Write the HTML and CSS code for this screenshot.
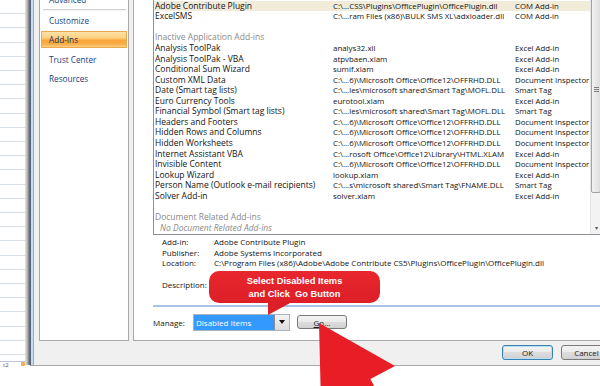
FILE: index.html
```html
<!DOCTYPE html>
<html>
<head>
<meta charset="utf-8">
<link rel="stylesheet" href="styles.css">
</head>
<body>
<div class="screen">
  <div class="sheet">
    <div class="sheet-grid"></div>
    <div class="sheet-tabs"><span class="tab-text">t2</span><span class="tab-icon"></span></div>
  </div>
  <div class="sheet-shadow"></div>
  <div class="dialog">
    <div class="panels">
      <nav class="nav">
        <div class="nav-item nav-top">Advanced</div>
        <div class="nav-sep"></div>
        <div class="nav-item">Customize</div>
        <div class="nav-item selected">Add-Ins</div>
        <div class="nav-item">Trust Center</div>
        <div class="nav-item">Resources</div>
      </nav>
      <section class="content">
        <div class="listbox">
          <div class="rows">
            <div class="row hl"><span>Adobe Contribute Plugin</span><span>C:\...CSS\Plugins\OfficePlugin\OfficePlugin.dll</span><span>COM Add-in</span></div>
            <div class="row"><span>ExcelSMS</span><span>C:\...ram Files (x86)\BULK SMS XL\adxloader.dll</span><span>COM Add-in</span></div>
            <div class="row"></div>
            <div class="row head"><span>Inactive Application Add-ins</span></div>
            <div class="row"><span>Analysis ToolPak</span><span>analys32.xll</span><span>Excel Add-in</span></div>
            <div class="row"><span>Analysis ToolPak - VBA</span><span>atpvbaen.xlam</span><span>Excel Add-in</span></div>
            <div class="row"><span>Conditional Sum Wizard</span><span>sumif.xlam</span><span>Excel Add-in</span></div>
            <div class="row"><span>Custom XML Data</span><span>C:\...6)\Microsoft Office\Office12\OFFRHD.DLL</span><span>Document Inspector</span></div>
            <div class="row"><span>Date (Smart tag lists)</span><span>C:\...les\microsoft shared\Smart Tag\MOFL.DLL</span><span>Smart Tag</span></div>
            <div class="row"><span>Euro Currency Tools</span><span>eurotool.xlam</span><span>Excel Add-in</span></div>
            <div class="row"><span>Financial Symbol (Smart tag lists)</span><span>C:\...les\microsoft shared\Smart Tag\MOFL.DLL</span><span>Smart Tag</span></div>
            <div class="row"><span>Headers and Footers</span><span>C:\...6)\Microsoft Office\Office12\OFFRHD.DLL</span><span>Document Inspector</span></div>
            <div class="row"><span>Hidden Rows and Columns</span><span>C:\...6)\Microsoft Office\Office12\OFFRHD.DLL</span><span>Document Inspector</span></div>
            <div class="row"><span>Hidden Worksheets</span><span>C:\...6)\Microsoft Office\Office12\OFFRHD.DLL</span><span>Document Inspector</span></div>
            <div class="row"><span>Internet Assistant VBA</span><span>C:\...rosoft Office\Office12\Library\HTML.XLAM</span><span>Excel Add-in</span></div>
            <div class="row"><span>Invisible Content</span><span>C:\...6)\Microsoft Office\Office12\OFFRHD.DLL</span><span>Document Inspector</span></div>
            <div class="row"><span>Lookup Wizard</span><span>lookup.xlam</span><span>Excel Add-in</span></div>
            <div class="row"><span>Person Name (Outlook e-mail recipients)</span><span>C:\...s\microsoft shared\Smart Tag\FNAME.DLL</span><span>Smart Tag</span></div>
            <div class="row"><span>Solver Add-in</span><span>solver.xlam</span><span>Excel Add-in</span></div>
            <div class="row"></div>
            <div class="row head"><span>Document Related Add-ins</span></div>
            <div class="row none"><span>No Document Related Add-ins</span></div>
          </div>
          <div class="scrollbar">
            <div class="thumb"><span class="grip"></span></div>
            <div class="sb-down">&#9662;</div>
          </div>
        </div>
        <div class="details">
          <span class="lbl">Add-in:</span><span>Adobe Contribute Plugin</span>
          <span class="lbl">Publisher:</span><span>Adobe Systems Incorporated</span>
          <span class="lbl">Location:</span><span>C:\Program Files (x86)\Adobe\Adobe Contribute CS5\Plugins\OfficePlugin\OfficePlugin.dll</span>
          <span class="lbl">&nbsp;</span><span></span>
          <span class="lbl">Description:</span><span></span>
        </div>
        <div class="sep"></div>
        <div class="manage">
          <span class="manage-lbl">Manage:</span>
          <div class="combo"><span class="combo-val">Disabled Items</span><span class="combo-btn"><span class="tri"></span></span></div>
          <button class="btn go"><u>G</u>o...</button>
        </div>
      </section>
    </div>
    <div class="buttons">
      <button class="btn ok">OK</button>
      <button class="btn">Cancel</button>
    </div>
  </div>
</div>
<div class="callout">Select Disabled Items<br>and Click&nbsp; Go Button</div>
<svg class="arrow" width="600" height="386" viewBox="0 0 600 386">
  <polygon points="319,323 395,366 370.4,379 398.4,432 373.6,445 345.6,392 321,405" fill="#e91d25"/>
</svg>
</body>
</html>
```
FILE: styles.css
```css
html, body {
  margin: 0;
  padding: 0;
}
body {
  width: 600px;
  height: 386px;
  overflow: hidden;
  position: relative;
  background: #ffffff;
  font-family: "Open Sans", "Noto Sans", sans-serif;
  font-size: 8px;
  color: #141414;
}
.screen {
  display: flex;
  width: 660px;
  height: 368px;
}
.sheet {
  width: 25px;
  display: flex;
  flex-direction: column;
  background: #fff;
}
.sheet-grid {
  flex: 1;
  background: repeating-linear-gradient(to bottom, #ffffff 0, #ffffff 13.2px, #d9dfe9 13.2px, #d9dfe9 14.2px);
  border-bottom: 1px solid #b9c3d3;
}
.sheet-tabs {
  height: 6px;
  display: flex;
  align-items: flex-start;
  justify-content: space-between;
  font-size: 6px;
  line-height: 6px;
  color: #555;
  overflow: hidden;
}
.tab-text { padding-left: 3px; }
.tab-icon {
  width: 4px;
  height: 4px;
  background: #e3b45a;
  border-radius: 1px;
}
.sheet-shadow {
  width: 5px;
  height: 365px;
  background: linear-gradient(to right, #e8e8e8, #b0b0b0 50%, #5a5a5a);
}
.dialog {
  width: 625px;
  height: 365px;
  border-left: 1px solid #55667e;
  padding-left: 4px;
  border-bottom: 1px solid #a8a8a8;
  background: linear-gradient(to right, #c9dbef 0, #c9dbef 3px, #96abc8 3px, #96abc8 4px, #f0f0f0 4px);
  background-origin: border-box;
  display: flex;
  flex-direction: column;
}
.panels {
  display: flex;
  gap: 4px;
  padding-left: 4px;
  height: 341px;
}
.nav {
  width: 90px;
  box-sizing: border-box;
  height: 341px;
  background: #fff;
  border: 1px solid #a9a9a9;
  border-top: none;
  overflow: hidden;
  font-size: 8.2px;
  color: #213e7c;
}
.nav-item {
  height: 17px;
  line-height: 17px;
  margin: 0 1px 2.5px 1px;
  padding-left: 8px;
  box-sizing: border-box;
}
.nav-top {
  margin-top: -9px;
  margin-bottom: 0;
}
.nav-sep {
  height: 0;
  border-top: 1px solid #cfcfcf;
  border-bottom: 1px solid #f4f4f4;
  margin: 1px 2px 0.5px 3px;
}
.selected {
  background: linear-gradient(#fee3a8 0%, #fccf7f 40%, #f9a63a 55%, #f8ad45 80%, #fbcf86 100%);
  border: 1px solid #eaa94a;
  padding-left: 7px;
  line-height: 15px;
  color: #1c2f66;
}
.content {
  width: 520px;
  box-sizing: border-box;
  height: 341px;
  background: #fff;
  border: 1px solid #a9a9a9;
  border-top: none;
  padding-left: 19px;
  display: flex;
  flex-direction: column;
}
.listbox {
  width: 449px;
  height: 235px;
  box-sizing: border-box;
  border-left: 1px solid #8a8f98;
  border-right: 1px solid #8a8f98;
  border-bottom: 1px solid #8a8f98;
  display: flex;
  font-size: 8.5px;
}
.rows {
  flex: 1;
  padding-top: 0.7px;
  overflow: hidden;
}
.row {
  display: grid;
  grid-template-columns: 178px 182px 1fr;
  height: 10.57px;
  line-height: 10.57px;
  padding-left: 1px;
  white-space: nowrap;
  overflow: hidden;
}
.row span {
  overflow: hidden;
}
.row span:nth-child(2) {
  font-size: 7.9px;
}
.row span:nth-child(3) {
  font-size: 7.8px;
}
.row.hl {
  background: #f1ebd9;
}
.row.head {
  color: #8a8a8a;
}
.row.none {
  color: #8a8a8a;
  font-style: italic;
  padding-left: 6px;
}
.scrollbar {
  width: 11px;
  background: #f3f3f3;
  border-left: 1px solid #e4e4e4;
  box-sizing: border-box;
  display: flex;
  flex-direction: column;
  overflow: hidden;
}
.thumb {
  margin-top: -14px;
  height: 207px;
  box-sizing: border-box;
  border: 1px solid #a3a3a3;
  border-radius: 2px;
  background: linear-gradient(to right, #f2f2f2, #dedede);
  display: flex;
  align-items: center;
  justify-content: center;
}
.grip {
  width: 5px;
  height: 5px;
  background: repeating-linear-gradient(to bottom, #7e7e7e 0, #7e7e7e 1px, transparent 1px, transparent 2px);
}
.sb-down {
  margin-top: auto;
  height: 11px;
  line-height: 11px;
  text-align: center;
  font-size: 6px;
  color: #555;
}
.details {
  display: grid;
  grid-template-columns: 52px 1fr;
  padding: 2px 0 0 9px;
  line-height: 10.7px;
  white-space: nowrap;
}
.sep {
  margin-top: 14px;
  height: 2px;
  width: 460px;
  background: #a7c3e6;
}
.manage {
  display: flex;
  align-items: center;
  margin-top: 7px;
  height: 17px;
}
.manage-lbl {
  width: 40px;
}
.combo {
  width: 97px;
  height: 17px;
  box-sizing: border-box;
  border: 1px solid #a9b4c2;
  display: flex;
  background: #fff;
}
.combo-val {
  flex: 1;
  background: #3399ff;
  color: #fff;
  line-height: 15px;
  padding-left: 2px;
}
.combo-btn {
  width: 14px;
  background: linear-gradient(#f4f4f4, #dcdcdc);
  border-left: 1px solid #8d8d8d;
  display: flex;
  align-items: center;
  justify-content: center;
}
.tri {
  width: 0;
  height: 0;
  border-left: 3px solid transparent;
  border-right: 3px solid transparent;
  border-top: 4px solid #111;
}
.btn {
  font-family: "Open Sans", "Noto Sans", sans-serif;
  font-size: 8px;
  color: #1c1c1c;
  width: 51px;
  height: 15px;
  padding: 0;
  box-sizing: border-box;
  border: 1px solid #7a7a7a;
  border-radius: 3px;
  background: linear-gradient(#f3f3f3 0%, #ebebeb 49%, #dddddd 50%, #d1d1d1 100%);
  line-height: 13px;
  text-align: center;
}
.go {
  margin-left: 7px;
  width: 50px;
  height: 14px;
}
.ok {
  border-color: #3c7fb1;
  box-shadow: inset 0 0 0 1px #b6e0f6;
}
.buttons {
  display: flex;
  justify-content: flex-end;
  gap: 8px;
  padding: 4px 48px 0 0;
}
.callout {
  position: absolute;
  left: 209px;
  top: 271px;
  width: 171px;
  height: 32px;
  box-sizing: border-box;
  padding-top: 3.5px;
  border-radius: 10px;
  background: linear-gradient(#e8262d, #dd1f27);
  color: #fff;
  font-family: "Liberation Sans", Arial, sans-serif;
  font-weight: bold;
  font-size: 9.3px;
  line-height: 13px;
  text-align: center;
}
.callout::after {
  content: "";
  position: absolute;
  left: 59px;
  top: 31px;
  width: 24px;
  height: 13px;
  background: #dd1f27;
  clip-path: polygon(0 0, 100% 0, 0 100%);
}
.arrow {
  position: absolute;
  left: 0;
  top: 0;
  pointer-events: none;
}
```
